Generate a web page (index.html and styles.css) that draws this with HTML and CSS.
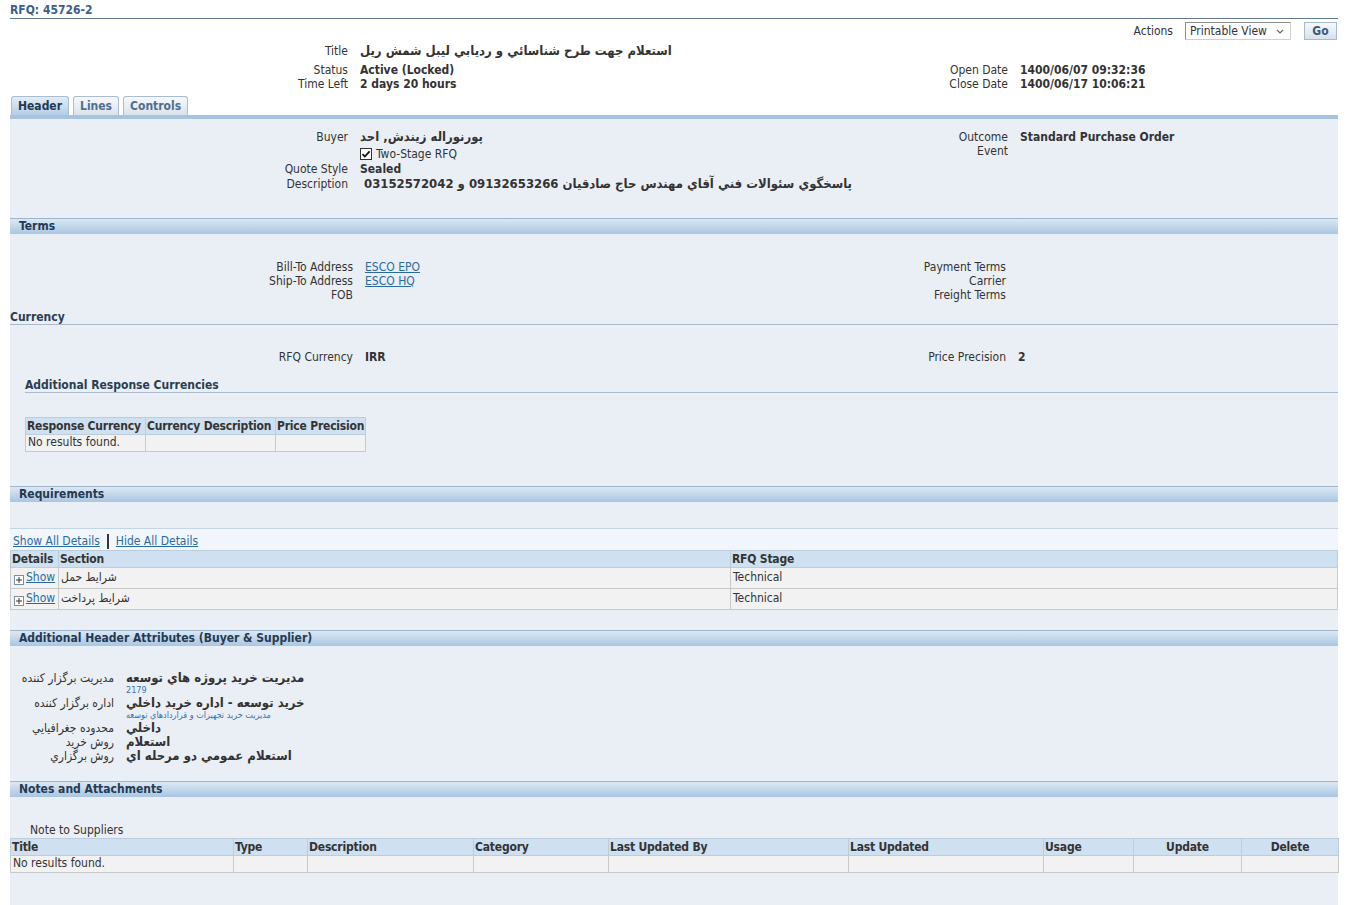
FILE: index.html
```html
<!DOCTYPE html>
<html lang="en">
<head>
<meta charset="utf-8">
<title>RFQ: 45726-2</title>
<link rel="stylesheet" href="styles.css">
</head>
<body>
<div class="page">
  <div class="page-title">RFQ: 45726-2</div>

  <div class="actions">
    <span class="actions-label">Actions</span>
    <div class="select"><span>Printable View</span><svg width="8" height="5" viewBox="0 0 8 5"><path d="M1 1l3 3 3-3" fill="none" stroke="#666" stroke-width="1.2"/></svg></div>
    <button class="btn">Go</button>
  </div>

  <div class="cols summary">
    <div class="fields lw338 rows-summary">
      <div class="lbl">Title</div><div class="val ar">استعلام جهت طرح شناسائي و ردیابي ليبل شمش ريل</div>
      <div class="lbl">Status</div><div class="val">Active (Locked)</div>
      <div class="lbl">Time Left</div><div class="val">2 days 20 hours</div>
    </div>
    <div class="fields lw338 rows-summary">
      <div class="lbl"></div><div class="val"></div>
      <div class="lbl">Open Date</div><div class="val">1400/06/07 09:32:36</div>
      <div class="lbl">Close Date</div><div class="val">1400/06/17 10:06:21</div>
    </div>
  </div>

  <div class="tabs">
    <a class="tab active">Header</a>
    <a class="tab">Lines</a>
    <a class="tab">Controls</a>
  </div>

  <div class="content">
    <div class="cols hdr">
      <div class="fields lw338 rows-hdr">
        <div class="lbl">Buyer</div><div class="val ar">پورنوراله زيندش, احد</div>
        <div class="lbl"></div><div class="val plain check-row"><svg class="chk" width="12" height="12" viewBox="0 0 12 12"><rect x="0.5" y="0.5" width="11" height="11" fill="#fff" stroke="#333"/><path d="M2.5 6.2l2.3 2.3L9.6 3.4" fill="none" stroke="#111" stroke-width="1.8"/></svg><span>Two-Stage RFQ</span></div>
        <div class="lbl">Quote Style</div><div class="val">Sealed</div>
        <div class="lbl">Description</div><div class="val ar desc">پاسخگوي سئوالات فني آقاي مهندس حاج صادقيان 09132653266 و 03152572042</div>
      </div>
      <div class="fields lw338">
        <div class="lbl">Outcome</div><div class="val">Standard Purchase Order</div>
        <div class="lbl">Event</div><div class="val"></div>
      </div>
    </div>

    <div class="section-bar">Terms</div>
    <div class="cols terms">
      <div class="fields lw343">
        <div class="lbl">Bill-To Address</div><div class="val plain"><a class="link">ESCO EPO</a></div>
        <div class="lbl">Ship-To Address</div><div class="val plain"><a class="link">ESCO HQ</a></div>
        <div class="lbl">FOB</div><div class="val"></div>
      </div>
      <div class="fields lw336">
        <div class="lbl">Payment Terms</div><div class="val"></div>
        <div class="lbl">Carrier</div><div class="val"></div>
        <div class="lbl">Freight Terms</div><div class="val"></div>
      </div>
    </div>

    <div class="sub-heading">Currency</div>
    <div class="cols currency">
      <div class="fields lw343">
        <div class="lbl">RFQ Currency</div><div class="val">IRR</div>
      </div>
      <div class="fields lw336">
        <div class="lbl">Price Precision</div><div class="val">2</div>
      </div>
    </div>

    <div class="sub-heading indent">Additional Response Currencies</div>
    <table class="grid cur-table">
      <colgroup><col class="c-rc"><col class="c-cd"><col class="c-pp"></colgroup>
      <thead><tr><th>Response Currency</th><th>Currency Description</th><th>Price Precision</th></tr></thead>
      <tbody><tr><td>No results found.</td><td></td><td></td></tr></tbody>
    </table>

    <div class="section-bar">Requirements</div>
    <div class="req">
      <div class="detail-links"><a class="link">Show All Details</a><span class="sep"></span><a class="link">Hide All Details</a></div>
      <table class="grid req-table">
        <colgroup><col class="c-details"><col class="c-section"><col class="c-stage"></colgroup>
        <thead><tr><th>Details</th><th>Section</th><th>RFQ Stage</th></tr></thead>
        <tbody>
          <tr><td class="show-cell"><svg class="plus" width="10" height="10" viewBox="0 0 10 10"><rect x="0.5" y="0.5" width="9" height="9" fill="#fff" stroke="#7f8e9d"/><path d="M2 5h6M5 2v6" stroke="#333"/></svg><a class="link show">Show</a></td><td>شرايط حمل</td><td>Technical</td></tr>
          <tr><td class="show-cell"><svg class="plus" width="10" height="10" viewBox="0 0 10 10"><rect x="0.5" y="0.5" width="9" height="9" fill="#fff" stroke="#7f8e9d"/><path d="M2 5h6M5 2v6" stroke="#333"/></svg><a class="link show">Show</a></td><td>شرايط پرداخت</td><td>Technical</td></tr>
        </tbody>
      </table>
    </div>

    <div class="section-bar">Additional Header Attributes (Buyer &amp; Supplier)</div>
    <div class="attrs">
      <div class="fields lw104 attr-fields">
        <div class="lbl">مديريت برگزار كننده</div>
        <div class="attr-val"><div class="big">مديريت خريد پروژه هاي توسعه</div><div class="small">2179</div></div>
        <div class="lbl">اداره برگزار كننده</div>
        <div class="attr-val"><div class="big">خريد توسعه - اداره خريد داخلي</div><div class="small">مديريت خريد تجهيزات و قراردادهاي توسعه</div></div>
        <div class="lbl">محدوده جغرافيايي</div>
        <div class="attr-val"><div class="big">داخلي</div></div>
        <div class="lbl">روش خريد</div>
        <div class="attr-val"><div class="big">استعلام</div></div>
        <div class="lbl">روش برگزاري</div>
        <div class="attr-val"><div class="big">استعلام عمومي دو مرحله اي</div></div>
      </div>
    </div>

    <div class="section-bar">Notes and Attachments</div>
    <div class="notes">
      <div class="note-label">Note to Suppliers</div>
      <table class="grid notes-table">
        <colgroup><col class="n-title"><col class="n-type"><col class="n-desc"><col class="n-cat"><col class="n-lub"><col class="n-lu"><col class="n-usage"><col class="n-upd"><col class="n-del"></colgroup>
        <thead><tr><th>Title</th><th>Type</th><th>Description</th><th>Category</th><th>Last Updated By</th><th>Last Updated</th><th>Usage</th><th class="center">Update</th><th class="center">Delete</th></tr></thead>
        <tbody><tr><td>No results found.</td><td></td><td></td><td></td><td></td><td></td><td></td><td></td><td></td></tr></tbody>
      </table>
    </div>
  </div>
</div>
</body>
</html>
```
FILE: styles.css
```css
* { box-sizing: border-box; }
html, body { margin: 0; background: #fff; }
body {
  font-family: "DejaVu Sans Condensed", "DejaVu Sans", sans-serif;
  font-stretch: semi-condensed;
  font-size: 12px;
  line-height: 14px;
  color: #333;
}
a { text-decoration: none; }
.page { padding: 0 10px; }

.page-title {
  padding: 3px 0 1px;
  font-weight: bold;
  color: #3b5f8a;
  border-bottom: 1px solid #5f7a95;
}

.actions {
  display: flex;
  justify-content: flex-end;
  align-items: center;
  height: 18px;
  margin-top: 3px;
  padding-right: 1px;
}
.actions-label { margin-right: 12px; }
.select {
  width: 106px;
  height: 18px;
  display: flex;
  align-items: center;
  justify-content: space-between;
  padding: 0 6px 0 4px;
  background: #fff;
  border: 1px solid;
  border-color: #8f8f8f #cfcfcf #cfcfcf #8f8f8f;
}
.btn {
  margin-left: 13px;
  width: 33px;
  height: 18px;
  padding: 0;
  border: 1px solid #a9b9c9;
  background: linear-gradient(#f7f9fb, #d6e1ed);
  font: bold 12px "DejaVu Sans Condensed", "DejaVu Sans", sans-serif;
  font-stretch: semi-condensed;
  color: #3c5a78;
}

.cols { display: grid; grid-template-columns: 660px 1fr; }
.fields {
  display: grid;
  grid-template-columns: var(--lw) 1fr;
  column-gap: 12px;
  grid-auto-rows: 14px;
  align-content: start;
}
.lw338 { --lw: 338px; }
.lw343 { --lw: 343px; }
.lw336 { --lw: 336px; }
.lw104 { --lw: 104px; }
.lbl { text-align: right; white-space: nowrap; }
.val { font-weight: bold; white-space: nowrap; }
.val.plain { font-weight: normal; }
.val.ar { font-size: 13px; }

.summary { margin-top: 4px; }
.rows-summary { grid-template-rows: 19px 14px 14px; }

.tabs {
  display: flex;
  gap: 4px;
  margin-top: 5px;
  padding-left: 1px;
  border-bottom: 4px solid #a6c4e0;
}
.tab {
  height: 19px;
  padding: 0 6px;
  border: 1px solid #a9bdd0;
  border-bottom: 0;
  border-radius: 3px 3px 0 0;
  background: linear-gradient(#f7f8fa, #d9e3ed);
  font-weight: bold;
  line-height: 18px;
  color: #4f6f8f;
}
.tab.active {
  background: linear-gradient(#e2edf7, #b3cde6);
  color: #23394f;
}

.content { background: #eaeff5; padding-bottom: 40px; }

.hdr { padding: 11px 0 27px; }
.rows-hdr { grid-template-rows: 15px 17px 15px 14px; }
.check-row { display: flex; align-items: center; gap: 4px; }
.desc { padding-left: 4px; }

.section-bar {
  height: 16px;
  border-top: 1px solid #9db6ce;
  background: linear-gradient(#dce8f4, #a8c6e2);
  padding-left: 9px;
  font-weight: bold;
  line-height: 15px;
  color: #243a52;
}

.link { color: #2a6b9c; text-decoration: underline; }

.terms { padding-top: 26px; }
.sub-heading {
  margin-top: 8px;
  font-weight: bold;
  color: #2b3d50;
  border-bottom: 1px solid #a8bccd;
}
.sub-heading.indent { margin: 14px 0 0 15px; }
.currency { margin-top: 25px; }

.grid { border-collapse: collapse; table-layout: fixed; }
.grid th {
  height: 17px;
  padding: 0 1px;
  background: #cfe0f1;
  border: 1px solid #bccddd;
  text-align: left;
  font-weight: bold;
  letter-spacing: -0.2px;
  white-space: nowrap;
  overflow: hidden;
  color: #333;
}
.grid td {
  height: 17px;
  padding: 0 2px;
  background: #f2f2f2;
  border: 1px solid #c9c9c9;
  white-space: nowrap;
  vertical-align: top;
}
.grid th.center { text-align: center; }

.cur-table { margin: 24px 0 34px 15px; width: 340px; }
.c-rc { width: 120px; }
.c-cd { width: 130px; }
.c-pp { width: 90px; }

.req { padding-top: 26px; margin-bottom: 20px; }
.detail-links {
  height: 22px;
  display: flex;
  align-items: center;
  padding: 3px 0 0 3px;
  background: #f1f6fc;
  border-top: 1px solid #c4d4e4;
}
.sep {
  display: inline-block;
  width: 2px;
  height: 15px;
  background: #333;
  margin: 0 7px;
}
.req-table { width: 100%; }
.c-details { width: 48px; }
.c-section { width: 672px; }
.req-table td { height: 21px; padding-top: 2px; }
.show-cell { white-space: nowrap; }
.plus { vertical-align: -4px; margin: 0 2px 0 1px; }

.attrs { padding-top: 25px; margin-bottom: 18px; }
.attr-fields { grid-auto-rows: auto; }
.attr-fields .lbl { line-height: 14px; }
.big { font-weight: bold; font-size: 13px; line-height: 14px; white-space: nowrap; }
.small { font-size: 9px; line-height: 11px; color: #3a6fae; white-space: nowrap; }

.notes { padding-top: 26px; }
.note-label { padding-left: 20px; margin-bottom: 1px; }
.notes-table { width: 100%; }
.n-title { width: 223px; }
.n-type { width: 74px; }
.n-desc { width: 166px; }
.n-cat { width: 135px; }
.n-lub { width: 240px; }
.n-lu { width: 195px; }
.n-usage { width: 90px; }
.n-upd { width: 108px; }
.n-del { width: 97px; }
```
